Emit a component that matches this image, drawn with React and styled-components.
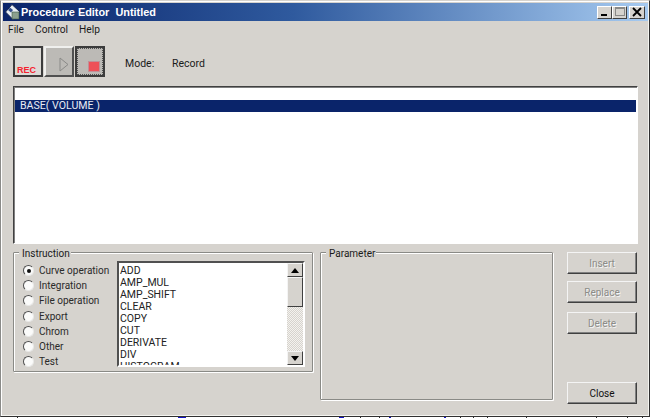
import React from "react";
import styled, { createGlobalStyle } from "styled-components";

const Global = createGlobalStyle`
  html, body { margin: 0; padding: 0; background: #fff; }
  body { width: 650px; height: 418px; overflow: hidden; }
  svg { display: block; }
`;

const Win = styled.div`
  box-sizing: border-box;
  width: 650px;
  height: 417px;
  background: #d6d3ce;
  border-top: 1px solid #d6d3ce;
  border-left: 1px solid #8a8a88;
  border-right: 1px solid #303030;
  border-bottom: 1px solid #303030;
  box-shadow: inset 1px 1px 0 #fff, inset -1px -1px 0 #f4f4f0;
  padding: 2px 1px 0 2px;
  display: flex;
  flex-direction: column;
  font-family: Roboto, "Liberation Sans", Arial, sans-serif;
  font-size: 10px;
  color: #1a1a1a;
  overflow: hidden;
`;

const BottomStrip = styled.svg`
  width: 650px;
  height: 1px;
  background: #fff;
`;

const TitleBar = styled.div`
  height: 18px;
  flex: none;
  display: flex;
  align-items: center;
  padding: 0 3px 0 2px;
  background: linear-gradient(90deg, #0a246a 0%, #2f5a9e 45%, #a6caf0 100%);
`;

const TitleText = styled.span`
  color: #fff;
  font-family: "Liberation Sans", Arial, sans-serif;
  font-weight: 700;
  font-size: 10.9px;
  white-space: pre;
`;

const WinBtns = styled.div`
  margin-left: auto;
  display: flex;
`;

const WinBtn = styled.div`
  box-sizing: border-box;
  width: ${(p) => (p.$gap ? 16 : 15)}px;
  height: 13px;
  margin-left: ${(p) => (p.$gap ? 2 : 0)}px;
  background: #d6d3ce;
  border: 1px solid;
  border-color: #fff #404040 #404040 #fff;
  display: flex;
  align-items: center;
  justify-content: center;
`;

const MenuBar = styled.div`
  height: 17px;
  flex: none;
  display: flex;
  align-items: center;
  padding-left: 5px;
  gap: 11px;
  font-size: 10.2px;
`;

const Toolbar = styled.div`
  display: flex;
  align-items: center;
  flex: none;
  height: 31px;
  margin: 8px 0 0 10px;
`;

const ToolBtn = styled.div`
  box-sizing: border-box;
  width: ${(p) => p.$w}px;
  height: 31px;
  margin-right: ${(p) => p.$mr || 0}px;
  position: relative;
  background: ${(p) => p.$bg};
  border: 2px solid;
  border-color: ${(p) => (p.$dark ? "#3c3c3c" : "#f0f0ee #505050 #505050 #f0f0ee")};
  outline: ${(p) => (p.$dots ? "1px dotted #505050" : "none")};
  outline-offset: -3px;
`;

const RecLabel = styled.span`
  position: absolute;
  left: 2px;
  bottom: 0;
  color: #f5222f;
  font-family: "Liberation Sans", Arial, sans-serif;
  font-size: 9px;
  font-weight: 700;
`;

const StopMark = styled.span`
  box-sizing: border-box;
  position: absolute;
  right: 3px;
  bottom: 3px;
  width: 12px;
  height: 11px;
  background: #ee5058;
  border: 1px solid #c09098;
`;

const PlayIcon = styled.svg`
  position: absolute;
  right: 3px;
  bottom: 3px;
`;

const ModeRow = styled.div`
  display: flex;
  align-items: center;
  padding-top: 4px;
  font-size: 10.5px;
`;

const ModeKey = styled.span`
  margin-left: 20px;
  width: 47px;
`;

const ListBox = styled.div`
  box-sizing: border-box;
  flex: none;
  height: 158px;
  margin: 9px 10px 0 10px;
  background: #fff;
  border: 1px solid;
  border-color: #404040 #fff #fff #404040;
  box-shadow: inset 1px 1px 0 #808080;
  padding: 1px 1px 0 1px;
`;

const ListRow = styled.div`
  box-sizing: border-box;
  height: 12px;
  line-height: 12px;
  padding-left: 5px;
  font-size: 10.6px;
  color: ${(p) => (p.$sel ? "#e8ecf4" : "#111")};
  background: ${(p) => (p.$sel ? "#0a246a" : "#fff")};
  white-space: pre;
`;

const Lower = styled.div`
  display: flex;
  flex: none;
  margin: 8px 10px 0 10px;
`;

const Group = styled.div`
  box-sizing: border-box;
  margin-right: ${(p) => p.$mr}px;
  width: ${(p) => p.$w}px;
  height: ${(p) => p.$h}px;
  border: 1px solid #8a8a86;
  box-shadow: 1px 1px 0 #fff, inset 1px 1px 0 #fff;
  border-radius: 1px;
  position: relative;
  align-self: flex-start;
  flex: none;
`;

const GroupTitle = styled.span`
  position: absolute;
  left: 5px;
  top: -5px;
  background: #d6d3ce;
  padding: 0 1px 0 3px;
  line-height: 12px;
  font-size: 10px;
`;

const InstrBody = styled.div`
  display: flex;
  height: 100%;
  padding: 8px 0 0 0;
  box-sizing: border-box;
`;

const Radios = styled.div`
  width: 103px;
  flex: none;
  display: flex;
  flex-direction: column;
  padding: 2px 0 0 9px;
  box-sizing: border-box;
`;

const RadioRow = styled.div`
  height: 15.2px;
  display: flex;
  align-items: center;
  gap: 5px;
  font-size: 10px;
  color: #2a2a2a;
  white-space: nowrap;
`;

const RadioDot = styled.span`
  box-sizing: border-box;
  width: 11px;
  height: 11px;
  border-radius: 50%;
  flex: none;
  background: #fbfbfa;
  border: 1px solid;
  border-color: #505050 #e8e8e6 #e8e8e6 #505050;
  display: flex;
  align-items: center;
  justify-content: center;
  &::after {
    content: "";
    width: 4px;
    height: 4px;
    border-radius: 50%;
    background: ${(p) => (p.$on ? "#111" : "transparent")};
  }
`;

const InstrList = styled.div`
  box-sizing: border-box;
  width: 188px;
  height: 106px;
  flex: none;
  border: 2px solid;
  border-color: #505050 #fff #fff #505050;
  background: #fff;
  display: flex;
  overflow: hidden;
`;

const InstrItems = styled.div`
  flex: 1;
  padding: 2px 0 0 1px;
  overflow: hidden;
  font-size: 10.5px;
  line-height: 12px;
  color: #222;
`;

const ScrollTrack = styled.div`
  width: 16px;
  flex: none;
  display: flex;
  flex-direction: column;
  background: repeating-conic-gradient(#d6d3ce 0 25%, #f4f2ee 0 50%) 0 0 / 2px 2px;
`;

const ScrollBtn = styled.div`
  box-sizing: border-box;
  width: 16px;
  height: ${(p) => p.$h}px;
  flex: none;
  margin-top: ${(p) => (p.$bottom ? "auto" : 0)};
  background: #d6d3ce;
  border: 1px solid;
  border-color: #f4f4f4 #404040 #404040 #f4f4f4;
  display: flex;
  align-items: center;
  justify-content: center;
`;

const ButtonCol = styled.div`
  display: flex;
  flex-direction: column;
  width: 70px;
  margin-left: 14px;
`;

const ActionBtn = styled.div`
  box-sizing: border-box;
  width: 70px;
  height: 22px;
  margin-top: ${(p) => p.$mt || 0}px;
  background: #d6d3ce;
  border: 1px solid;
  border-color: #f4f4f4 #404040 #404040 #f4f4f4;
  box-shadow: inset -1px -1px 0 #808080;
  display: flex;
  align-items: center;
  justify-content: center;
  font-size: 10px;
  color: ${(p) => (p.$off ? "#8c8c88" : "#111")};
  text-shadow: ${(p) => (p.$off ? "1px 1px 0 #f4f4f4" : "none")};
`;

const items = ["ADD", "AMP_MUL", "AMP_SHIFT", "CLEAR", "COPY", "CUT", "DERIVATE", "DIV", "HISTOGRAM"];
const radios = ["Curve operation", "Integration", "File operation", "Export", "Chrom", "Other", "Test"];
const marks = [
  [17, 1, "#303030"], [178, 8, "#1414c8"], [339, 5, "#1414c8"], [360, 1, "#303030"],
  [379, 1, "#303030"], [389, 2, "#1414c8"], [444, 2, "#1414c8"], [460, 1, "#303030"],
  [473, 1, "#303030"], [487, 1, "#303030"], [526, 1, "#303030"], [596, 1, "#303030"],
  [627, 1, "#303030"], [642, 1, "#303030"],
];

const Logo = () => (
  <svg width="16" height="16" viewBox="0 0 16 16">
    <path d="M7 0.5 L15 8 L8 15.5 L0.5 8 Z" fill="#e8eef4" stroke="#16264e" />
    <path d="M5 3.5 L8 6 L6 8.5 L3 6 Z" fill="#33508e" />
    <rect x="7" y="8" width="7" height="7" fill="#8ba08e" stroke="#3c5a48" strokeWidth="0.6" />
  </svg>
);

export default function App() {
  return (
    <>
      <Global />
      <Win>
        <TitleBar>
          <Logo />
          <TitleText>Procedure Editor  Untitled</TitleText>
          <WinBtns>
            <WinBtn>
              <svg width="10" height="10" viewBox="0 0 10 10"><rect x="1" y="7" width="6" height="2" fill="#000" /></svg>
            </WinBtn>
            <WinBtn>
              <svg width="10" height="10" viewBox="0 0 10 10"><rect x="0.5" y="0.5" width="9" height="8" fill="none" stroke="#8a8a88" /><rect x="0" y="0" width="10" height="2" fill="#8a8a88" /></svg>
            </WinBtn>
            <WinBtn $gap>
              <svg width="10" height="10" viewBox="0 0 10 10"><path d="M1 1 L9 9 M9 1 L1 9" stroke="#000" strokeWidth="1.8" /></svg>
            </WinBtn>
          </WinBtns>
        </TitleBar>
        <MenuBar>
          <span>File</span>
          <span>Control</span>
          <span>Help</span>
        </MenuBar>
        <Toolbar>
          <ToolBtn $dark $w={30} $bg="#dcdad6" $mr={1}><RecLabel>REC</RecLabel></ToolBtn>
          <ToolBtn $w={30} $bg="#bcbab6" $mr={1}>
            <PlayIcon width="10" height="15" viewBox="0 0 10 15"><path d="M1 1 L9 7.5 L1 14 Z" fill="#bcbab6" stroke="#8a8a88" /></PlayIcon>
          </ToolBtn>
          <ToolBtn $dark $dots $w={30} $bg="#bcbab6"><StopMark /></ToolBtn>
          <ModeRow>
            <ModeKey>Mode:</ModeKey>
            <span>Record</span>
          </ModeRow>
        </Toolbar>
        <ListBox>
          <ListRow> </ListRow>
          <ListRow $sel>BASE( VOLUME )</ListRow>
        </ListBox>
        <Lower>
          <Group $w={300} $h={120} $mr={7}>
            <GroupTitle>Instruction</GroupTitle>
            <InstrBody>
              <Radios>
                {radios.map((r, i) => (
                  <RadioRow key={r}><RadioDot $on={i === 0} />{r}</RadioRow>
                ))}
              </Radios>
              <InstrList>
                <InstrItems>
                  {items.map((t) => <div key={t}>{t}</div>)}
                </InstrItems>
                <ScrollTrack>
                  <ScrollBtn $h={14}>
                    <svg width="8" height="5" viewBox="0 0 8 5"><path d="M4 0 L8 5 L0 5 Z" fill="#000" /></svg>
                  </ScrollBtn>
                  <ScrollBtn $h={30} />
                  <ScrollBtn $bottom $h={14}>
                    <svg width="8" height="5" viewBox="0 0 8 5"><path d="M4 5 L8 0 L0 0 Z" fill="#000" /></svg>
                  </ScrollBtn>
                </ScrollTrack>
              </InstrList>
            </InstrBody>
          </Group>
          <Group $w={233} $h={148} $mr={0}>
            <GroupTitle>Parameter</GroupTitle>
          </Group>
          <ButtonCol>
            <ActionBtn $off>Insert</ActionBtn>
            <ActionBtn $off $mt={7}>Replace</ActionBtn>
            <ActionBtn $off $mt={9}>Delete</ActionBtn>
            <ActionBtn $mt={48}>Close</ActionBtn>
          </ButtonCol>
        </Lower>
      </Win>
      <BottomStrip viewBox="0 0 650 1">
        {marks.map(([x, w, c]) => <rect key={x} x={x} y="0" width={w} height="1" fill={c} />)}
      </BottomStrip>
    </>
  );
}
